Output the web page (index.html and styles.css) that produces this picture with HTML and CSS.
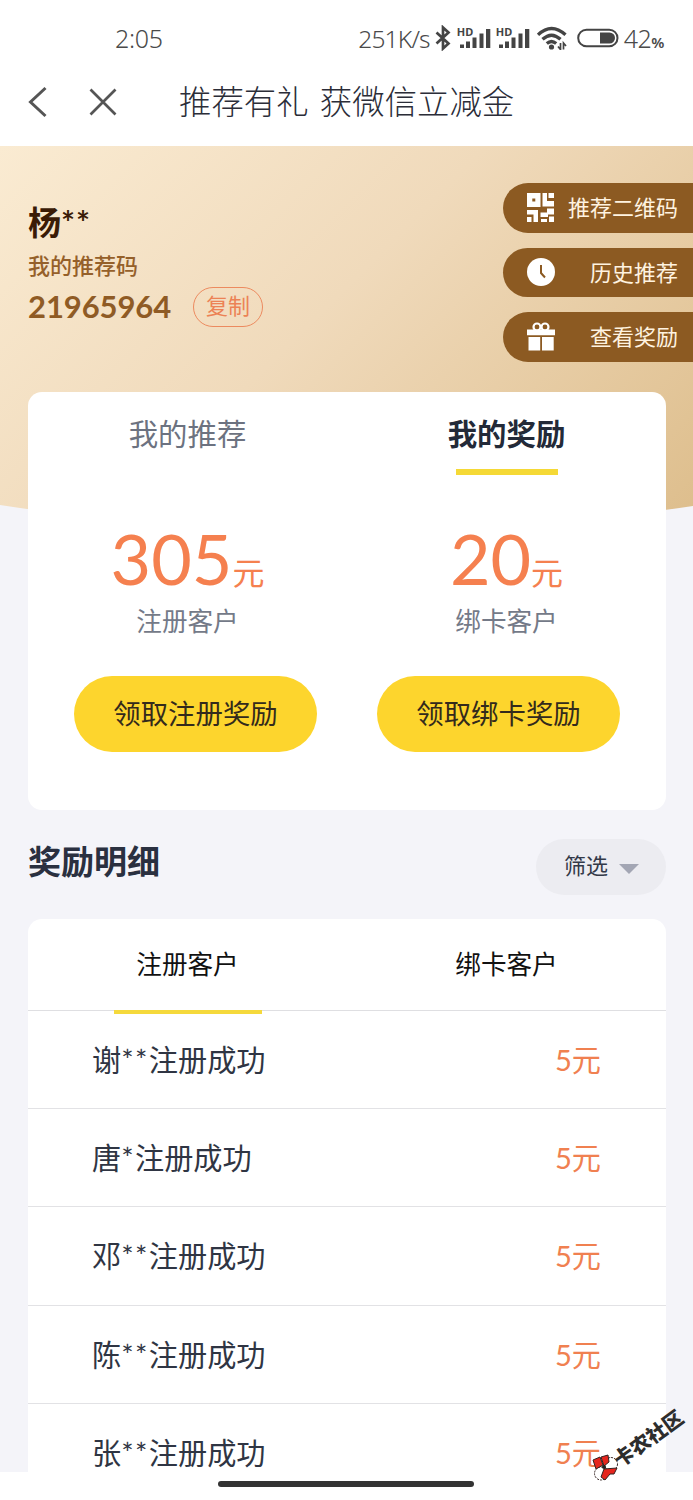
FILE: index.html
```html
<!DOCTYPE html>
<html lang="zh-CN">
<head>
<meta charset="utf-8">
<title>推荐有礼 获微信立减金</title>
<link rel="stylesheet" href="styles.css">
</head>
<body>
<div class="screen">
  <header class="top">
    <div class="status">
      <span class="time">2:05</span>
      <div class="status-right">
        <span class="speed">251K/s</span>
        <svg class="bt" width="16" height="26" viewBox="0 0 16 26"><path d="M1.500 7.500L13.500 18.500L8 23.500V2.500L13.500 7.500L1.500 18.500" fill="none" stroke="#444" stroke-width="2.700"/></svg>
        <div class="signal"><span class="hd">HD</span><svg width="33" height="24" viewBox="0 0 33 24"><path fill="#444" d="M2 18.500h4V22H2zM8 15.500h4V22H8zM14.500 11.500h4V22h-4zM21.500 7.500h4V22h-4zM28 3h4.300v19H28z"/></svg></div>
        <div class="signal second"><span class="hd">HD</span><svg width="33" height="24" viewBox="0 0 33 24"><path fill="#444" d="M2 18.500h4V22H2zM8 15.500h4V22H8zM14.500 11.500h4V22h-4zM21.500 7.500h4V22h-4zM28 3h4.300v19H28z"/></svg></div>
        <svg class="wifi" width="30" height="24" viewBox="0 0 30 24"><g fill="none" stroke="#444" stroke-width="3.300"><path d="M1 8.800Q14.500-4 28.500 8.800M5.500 13.300Q14.500 5 23.500 13.300M9.800 17.600Q14.500 13.500 19.200 17.600"/></g><circle cx="14.500" cy="21" r="2.600" fill="#444"/><path d="M23.500 17v6.500L21 20.500M26.500 23.500V17l2.500 3" fill="none" stroke="#444" stroke-width="1.700"/></svg>
        <svg class="battery" width="42" height="20" viewBox="0 0 42 20"><rect x="1.200" y="1.700" width="39.300" height="16.600" rx="8.300" fill="none" stroke="#444" stroke-width="2"/><path d="M23 4.500h9.500a5.500 5.500 0 0 1 0 11H23z" fill="#444"/></svg>
        <span class="pct">42<small>%</small></span>
      </div>
    </div>
    <nav class="nav">
      <svg class="back" width="20" height="32" viewBox="0 0 20 32"><path d="M17.500 2L2.500 16L17.500 30" fill="none" stroke="#555" stroke-width="3"/></svg>
      <svg class="close" width="28" height="28" viewBox="0 0 28 28"><path d="M1.500 1.500L26.500 26.500M26.500 1.500L1.500 26.500" fill="none" stroke="#555" stroke-width="2.700"/></svg>
      <h1 class="title">推荐有礼 获微信立减金</h1>
    </nav>
  </header>

  <main class="content">
    <section class="hero">
      <div class="profile">
        <div class="name">杨<i>**</i></div>
        <div class="code-label">我的推荐码</div>
        <div class="code-row"><span class="code">21965964</span><span class="copy">复制</span></div>
      </div>
      <div class="links">
        <div class="link">
          <svg width="28" height="29" viewBox="0 0 28 29"><path fill="#fff" fill-rule="evenodd" d="M0 0h13.500v14H0zM5.300 5.500v3h3v-3zM15.500 0H20v8h7v5.500H15.500zM21.500 0H27v5h-5.500zM0 17h11v12H6.500v-7.500H0zM0 24h4.500v5H0zM20 15.500h7v6h-6V24h-7.500v-4.500H20zM14 26h6v3h-6zM22 23.500h5V29h-5z"/></svg>
          <span>推荐二维码</span>
        </div>
        <div class="link">
          <svg width="28" height="28" viewBox="0 0 28 28"><circle cx="14" cy="14" r="14" fill="#fff"/><path d="M14 7v8l4 4.500" fill="none" stroke="#8c5a22" stroke-width="2"/></svg>
          <span>历史推荐</span>
        </div>
        <div class="link">
          <svg width="28" height="29" viewBox="0 0 28 29"><g fill="none" stroke="#fff" stroke-width="2.200"><circle cx="10" cy="5" r="3.500"/><circle cx="18" cy="5" r="3.500"/></g><path fill="#fff" d="M0 7.500h28v5.800H0zM1.500 15h11.700v13.500H1.500zM15 15h11.700v13.500H15z"/></svg>
          <span>查看奖励</span>
        </div>
      </div>
    </section>

    <section class="summary">
      <div class="halves tabs">
        <div class="tab">我的推荐</div>
        <div class="tab active">我的奖励</div>
      </div>
      <div class="halves">
        <div class="stat"><div class="amount">305<small>元</small></div><div class="stat-label">注册客户</div></div>
        <div class="stat"><div class="amount">20<small>元</small></div><div class="stat-label">绑卡客户</div></div>
      </div>
      <div class="actions">
        <div class="btn">领取注册奖励</div>
        <div class="btn">领取绑卡奖励</div>
      </div>
    </section>

    <div class="section-head">
      <h2>奖励明细</h2>
      <div class="filter"><span>筛选</span><svg width="20" height="10" viewBox="0 0 20 10"><path d="M0 0h20L10 10z" fill="#a3a6b4"/></svg></div>
    </div>

    <section class="list">
      <div class="halves list-tabs">
        <div class="list-tab on">注册客户</div>
        <div class="list-tab">绑卡客户</div>
      </div>
      <div class="row"><span>谢<i>**</i>注册成功</span><b>5元</b></div>
      <div class="row"><span>唐<i>*</i>注册成功</span><b>5元</b></div>
      <div class="row"><span>邓<i>**</i>注册成功</span><b>5元</b></div>
      <div class="row"><span>陈<i>**</i>注册成功</span><b>5元</b></div>
      <div class="row"><span>张<i>**</i>注册成功</span><b>5元</b></div>
    </section>
  </main>

  <footer class="home"><div class="bar"></div></footer>

  <div class="watermark">
    <svg width="28" height="28" viewBox="0 0 28 28"><circle cx="19" cy="10" r="6.500" fill="#fff" stroke="#322" stroke-width="1" stroke-dasharray="2 1"/><circle cx="9" cy="19.500" r="6.500" fill="#fff" stroke="#322" stroke-width="1" stroke-dasharray="2 1"/><path d="M1 6l7-3 3 8-7 4zM9 3l7-2 1 7-5 4zM12 15l13-1-3 6-4 0-5 6-4-3z" fill="#e5251d" stroke="#322" stroke-width="1"/><circle cx="12" cy="13" r="2" fill="#222"/></svg>
    <span>卡农社区</span>
  </div>
</div>
</body>
</html>
```
FILE: styles.css
```css
* { box-sizing: border-box; }
body { margin: 0; background: #fff; font-family: Lato, "Noto Sans CJK SC", sans-serif; }
h1, h2 { margin: 0; }
i { font-style: normal; }
svg { display: block; flex: none; }
.screen { position: relative; width: 693px; height: 1500px; overflow: hidden; display: flex; flex-direction: column; }

.top { height: 146px; flex: none; }
.status { height: 70px; padding: 6px 29px 0 115px; display: flex; align-items: center; justify-content: space-between; color: #4a4a4a; font-family: "Noto Sans", sans-serif; font-weight: 300; }
.time { font-size: 25px; letter-spacing: -0.300px; }
.status-right { display: flex; align-items: center; }
.speed { font-size: 24.500px; letter-spacing: -0.800px; }
.bt { margin: 0 7px 0 5px; }
.signal { position: relative; margin-right: 6px; }
.signal.second { margin-right: 7px; }
.hd { position: absolute; left: -1px; top: -1px; font: 700 11px/14px "Noto Sans", sans-serif; color: #444; }
.wifi { margin-right: 10px; }
.battery { margin-right: 5px; }
.pct { font-size: 25px; letter-spacing: -0.500px; }
.pct small { font-size: 15px; font-weight: 600; }
.nav { height: 64px; padding-left: 28px; display: flex; align-items: center; }
.close { margin-left: 41px; }
.title { margin-left: 62px; font-size: 32.4px; line-height: 48px; font-weight: 300; color: #2b2d38; word-spacing: 2.500px; white-space: nowrap; }

.content { height: 1326px; flex: none; overflow: hidden; background: #f4f4f9; }
.hero { height: 390px; display: flex; justify-content: space-between; background: linear-gradient(135deg, #faebd2 0%, #f0dabb 45%, #ddbd8b 100%); clip-path: path("M0 0H693V360Q346 412 0 359Z"); }
.profile { padding: 52px 0 0 28px; }
.name { font-size: 33px; line-height: 48px; font-weight: 700; color: #3a1b06; }
.name i { letter-spacing: 1px; }
.code-label { font-size: 22px; line-height: 32px; margin-top: 4px; font-weight: 500; color: #95602a; }
.code-row { display: flex; align-items: center; margin-top: 5px; }
.code { font-size: 31px; line-height: 40px; font-weight: 700; color: #8f5b25; letter-spacing: -0.100px; position: relative; top: -1px; }
.copy { margin-left: 22px; width: 70px; height: 40px; border: 1.5px solid #ec8a5f; border-radius: 20px; text-align: center; font-size: 22px; line-height: 36px; color: #ec8255; }
.links { padding-top: 37px; display: flex; flex-direction: column; gap: 15px; }
.link { width: 190px; height: 49.6px; padding: 0 15px 0 24px; border-radius: 25px 0 0 25px; background: #8c5a22; color: #fff3e0; display: flex; align-items: center; justify-content: space-between; font-size: 22px; line-height: 49px; }

.summary { position: relative; height: 418px; margin: -144px 27px 0 28px; border-radius: 14px; background: #fff; }
.halves { display: grid; grid-template-columns: 1fr 1fr; text-align: center; }
.tabs { height: 130px; }
.tab { font-size: 29.4px; line-height: 84px; color: #6c7280; }
.tab.active { font-weight: 700; color: #232a38; }
.tab.active::after { content: ""; display: block; width: 102px; height: 6px; margin: -7px auto 0; background: #f5d936; }
.amount { height: 78px; line-height: 73px; font-size: 70px; color: #f5804f; }
.amount small { font-size: 32px; }
.stat-label { font-size: 25.6px; line-height: 43px; height: 40px; color: #747a88; }
.actions { display: flex; gap: 60px; padding: 36px 46px 0; }
.btn { width: 243px; height: 76px; border-radius: 38px; background: #fdd52d; text-align: center; font-size: 27.4px; line-height: 75px; color: #332a1c; }

.section-head { height: 109px; padding: 29px 27px 0 28px; display: flex; justify-content: space-between; }
.section-head h2 { font-size: 33px; line-height: 44px; color: #2a3040; }
.filter { width: 130px; height: 56px; padding-left: 28px; border-radius: 28px; background: #ececf1; display: flex; align-items: center; gap: 11px; font-size: 22px; line-height: 52px; color: #333948; }
.filter span { margin-top: -3px; }
.filter svg { margin-top: 3px; }

.list { margin: 0 27px 0 28px; border-radius: 14px 14px 0 0; background: #fff; }
.list-tabs { height: 92px; border-bottom: 1.500px solid #dfdfe2; }
.list-tab { height: 95px; font-size: 25.6px; line-height: 90px; color: #111; }
.list-tab.on::after { content: ""; display: block; width: 148px; height: 4px; margin: 1px auto 0; background: #f5d93c; }
.row { height: 98.2px; padding: 0 65px 3px 64px; border-bottom: 1.500px solid #e2e2e5; display: flex; align-items: center; justify-content: space-between; font-size: 29.2px; color: #2f3543; }
.row i { letter-spacing: 1.400px; }
.row b { font-weight: 400; color: #f08050; }

.home { height: 28px; padding: 9px 1px 0 0; display: flex; justify-content: center; }
.bar { width: 256px; height: 6px; border-radius: 3px; background: #333; }

.watermark { position: absolute; left: 592px; top: 1408px; width: 101px; height: 76px; }
.watermark svg { position: absolute; left: 0; top: 46px; }
.watermark span { position: absolute; left: 16px; top: 15px; font-size: 20px; line-height: 30px; font-weight: 900; color: #2d2d2d; transform: rotate(-36deg); white-space: nowrap; }
```
